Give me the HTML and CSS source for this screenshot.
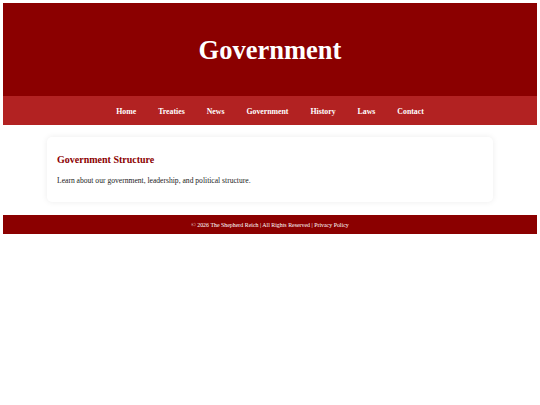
FILE: index.html
```html
<!DOCTYPE html>
<html lang="en">
<head>
    <meta charset="UTF-8">
    <title>Government - The Shepherd Reich</title>
    <link rel="stylesheet" href="styles.css">
</head>
<body>
    <header class="site-header">
        <h1>Government</h1>
    </header>
    <nav class="site-nav">
        <a href="#">Home</a>
        <a href="#">Treaties</a>
        <a href="#">News</a>
        <a href="#">Government</a>
        <a href="#">History</a>
        <a href="#">Laws</a>
        <a href="#">Contact</a>
    </nav>

    <main class="content">
        <section class="card">
            <h2>Government Structure</h2>
            <p>Learn about our government, leadership, and political structure.</p>
        </section>
    </main>

    <footer class="site-footer">
        &copy; 2026 The Shepherd Reich | All Rights Reserved | Privacy Policy
    </footer>
</body>
</html>
```

FILE: styles.css
```css
body {
    margin: 3px;
    font-family: "Liberation Serif", "Times New Roman", serif;
    color: #222;
    background: #fff;
}

.site-header {
    background-color: #8b0000;
    height: 93px;
    display: flex;
    align-items: center;
    justify-content: center;
}

.site-header h1 {
    margin: 0;
    color: #fff;
    font-size: 26.5px;
    font-weight: bold;
    padding-top: 2px;
}

.site-nav {
    background-color: #b22222;
    height: 29px;
    display: flex;
    align-items: center;
    justify-content: center;
    gap: 22px;
}

.site-nav a {
    color: #fff;
    text-decoration: none;
    font-weight: bold;
    font-size: 7.8px;
    padding-top: 1px;
}

.content {
    padding: 12px 44px 13px 44px;
}

.card {
    background: #fff;
    border-radius: 5px;
    box-shadow: 0 0 6px rgba(0,0,0,0.08);
    padding: 10px 10px 10px 10px;
    height: 45px;
}

.card h2 {
    margin: 7px 0 0 0;
    color: #8b0000;
    font-size: 10px;
    line-height: 12px;
}

.card p {
    margin: 10px 0 0 0;
    font-size: 7.6px;
    line-height: 9px;
    color: #222;
}

.site-footer {
    background-color: #8b0000;
    color: #fff;
    height: 19px;
    display: flex;
    align-items: center;
    justify-content: center;
    font-size: 5.9px;
}
```
